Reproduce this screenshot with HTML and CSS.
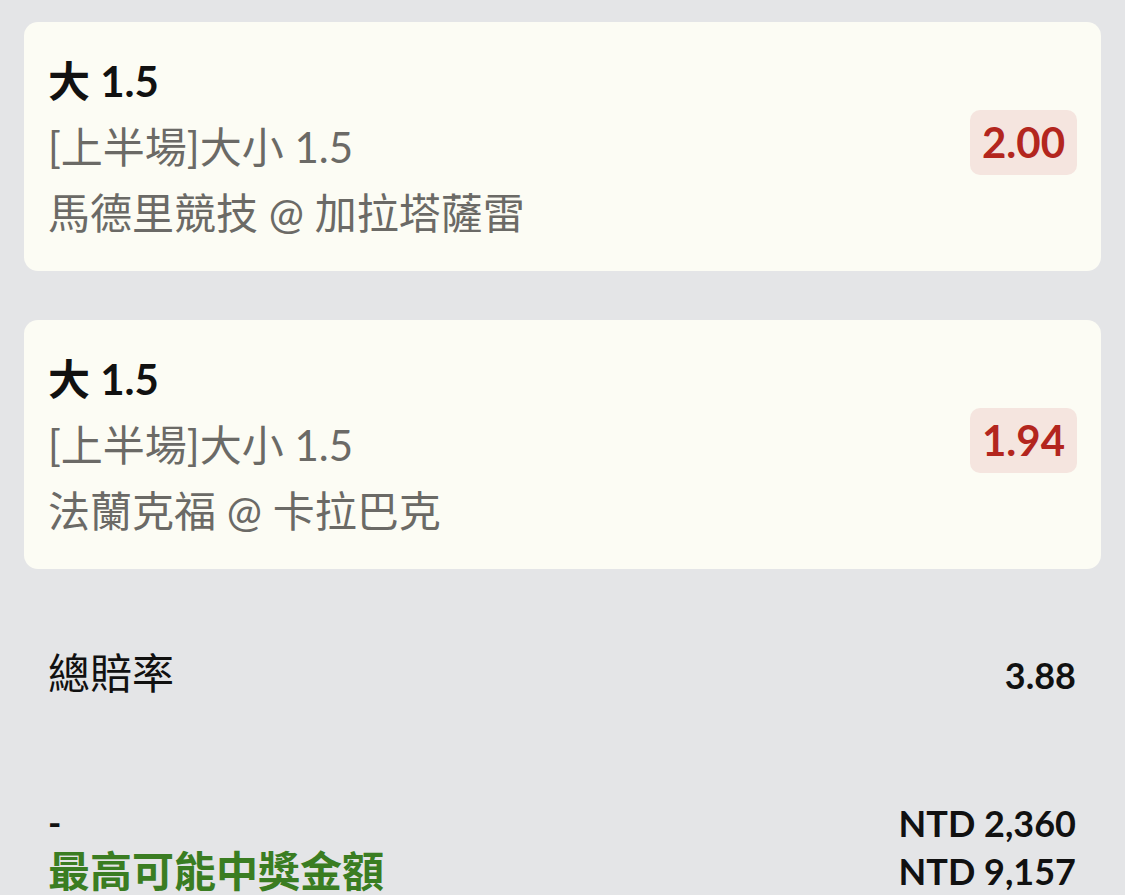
FILE: index.html
```html
<!DOCTYPE html>
<html lang="zh-Hant">
<head>
<meta charset="utf-8">
<link rel="stylesheet" href="styles.css">
</head>
<body>
<main class="slip">
  <section class="card">
    <div class="info">
      <div class="title">大 1.5</div>
      <div class="sub">[上半場]大小 1.5</div>
      <div class="sub">馬德里競技 @ 加拉塔薩雷</div>
    </div>
    <div class="odds">2.00</div>
  </section>
  <section class="card">
    <div class="info">
      <div class="title">大 1.5</div>
      <div class="sub">[上半場]大小 1.5</div>
      <div class="sub">法蘭克福 @ 卡拉巴克</div>
    </div>
    <div class="odds">1.94</div>
  </section>
  <div class="row total-odds">
    <span class="label">總賠率</span>
    <span class="value">3.88</span>
  </div>
  <div class="row payout">
    <div class="col-left">
      <div class="dash">-</div>
      <div class="win">最高可能中獎金額</div>
    </div>
    <div class="col-right">
      <div class="value">NTD 2,360</div>
      <div class="value">NTD 9,157</div>
    </div>
  </div>
</main>
</body>
</html>
```
FILE: styles.css
```css
html, body {
  margin: 0;
  padding: 0;
  background: #e4e5e7;
}
body {
  font-family: Lato, "Noto Sans CJK TC", sans-serif;
  color: #111;
}
.slip {
  padding: 22px 24px 0 24px;
  display: flex;
  flex-direction: column;
}
.card {
  background: #fcfcf4;
  border-radius: 14px;
  padding: 26px 24px 25px 24px;
  display: flex;
  justify-content: space-between;
  align-items: center;
  margin-bottom: 49px;
}
.info {
  display: flex;
  flex-direction: column;
}
.title {
  font-size: 42px;
  font-weight: 700;
  line-height: 66px;
  color: #111;
}
.sub {
  font-size: 42px;
  line-height: 66px;
  color: #6b6a66;
}
.odds {
  background: #f5e5df;
  color: #b3261e;
  font-size: 42px;
  font-weight: 700;
  line-height: 65px;
  padding: 0 12px;
  border-radius: 10px;
  margin-bottom: 10px;
}
.row {
  display: flex;
  justify-content: space-between;
  padding: 0 25px 0 24px;
}
.total-odds {
  align-items: baseline;
  margin-top: 22px;
}
.total-odds .label {
  font-size: 42px;
  color: #111;
}
.value {
  font-size: 36px;
  font-weight: 700;
  color: #111;
}
.payout {
  margin-top: 98px;
}
.col-left, .col-right {
  display: flex;
  flex-direction: column;
}
.col-right {
  align-items: flex-end;
}
.col-right .value {
  line-height: 48px;
}
.dash {
  font-size: 36px;
  font-weight: 700;
  line-height: 46px;
}
.win {
  font-size: 42px;
  font-weight: 700;
  color: #3a7d22;
  line-height: 52px;
}
```
